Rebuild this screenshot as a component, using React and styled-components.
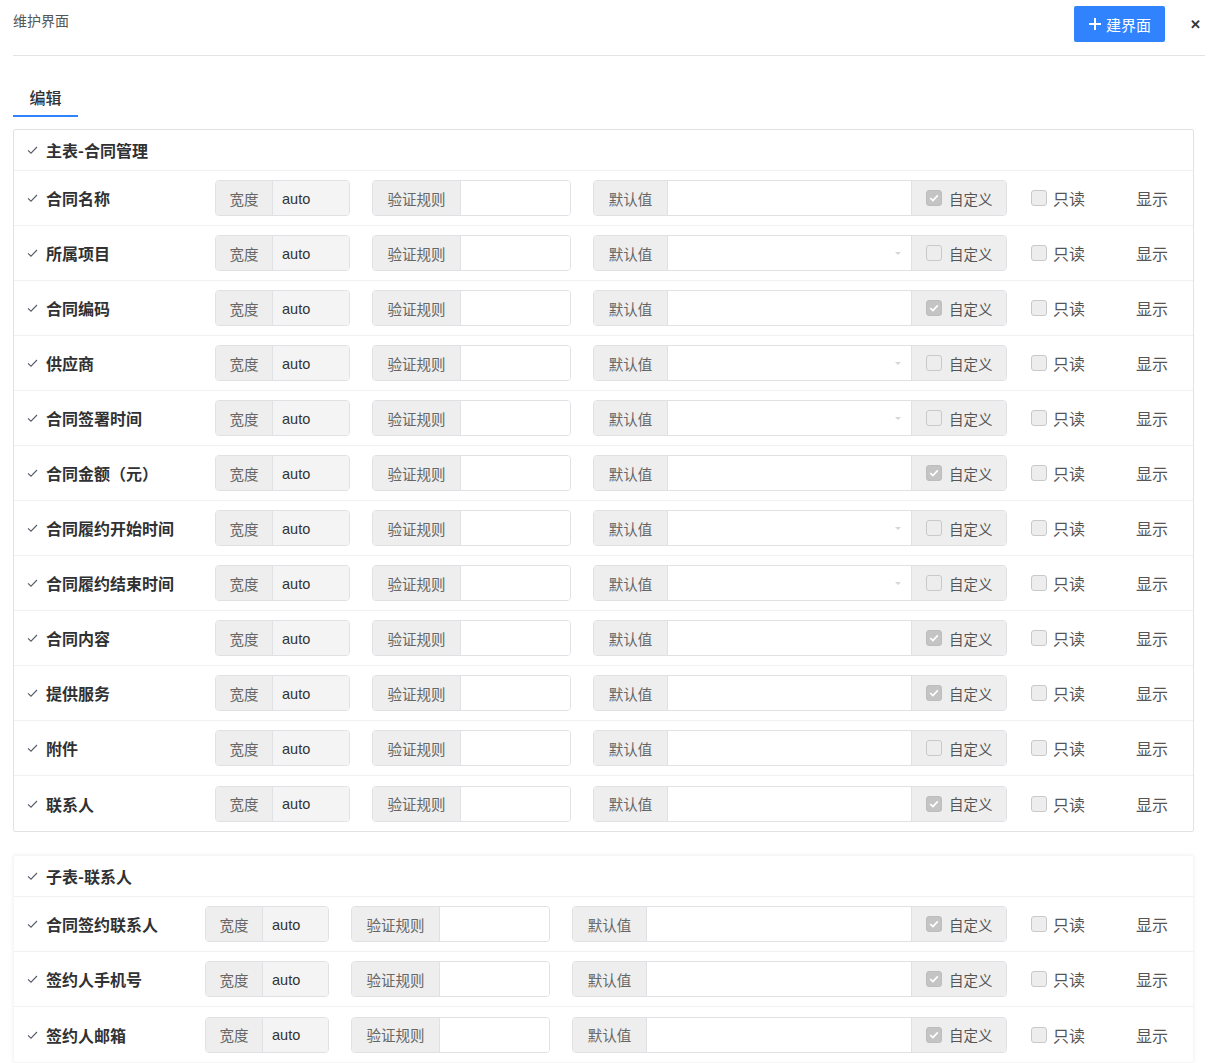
import styled, { createGlobalStyle } from "styled-components";

const GlobalStyle = createGlobalStyle`
  body {
    margin: 0;
    background: #fff;
    font-family: "Noto Sans CJK SC", "Noto Sans", "Liberation Sans", sans-serif;
    color: #333;
  }
  * { box-sizing: border-box; }
`;

const mainFields = [
  { name: "合同名称", custom: true },
  { name: "所属项目", custom: false, select: true },
  { name: "合同编码", custom: true },
  { name: "供应商", custom: false, select: true },
  { name: "合同签署时间", custom: false, select: true },
  { name: "合同金额（元）", custom: true },
  { name: "合同履约开始时间", custom: false, select: true },
  { name: "合同履约结束时间", custom: false, select: true },
  { name: "合同内容", custom: true },
  { name: "提供服务", custom: true },
  { name: "附件", custom: false },
  { name: "联系人", custom: true },
];

const subFields = [
  { name: "合同签约联系人", custom: true },
  { name: "签约人手机号", custom: true },
  { name: "签约人邮箱", custom: true },
];

// column widths: label, 宽度, 验证规则, 默认值
const sections = [
  { title: "主表-合同管理", fields: mainFields, cols: [166, 135, 199, 414], bordered: true },
  { title: "子表-联系人", fields: subFields, cols: [156, 124, 199, 435], bordered: false },
];

const Check = () => (
  <svg width="11" height="8" viewBox="0 0 11 8" fill="none">
    <path d="M1 4.3L4 7.2L10 1" stroke="#555b66" strokeWidth="1.1" />
  </svg>
);

const Box = ({ checked }) => (
  <BoxMark $checked={checked}>
    {checked && (
      <svg width="10" height="8" viewBox="0 0 10 8" fill="none">
        <path d="M1.2 4L3.9 6.6L8.8 1.4" stroke="#fff" strokeWidth="1.7" />
      </svg>
    )}
  </BoxMark>
);

const FieldRow = ({ field, cols }) => (
  <Row $cols={cols}>
    <Label>
      <Check />
      <span>{field.name}</span>
    </Label>
    <Group>
      <Prefix $w={57}>宽度</Prefix>
      <Input $disabled>auto</Input>
    </Group>
    <Group>
      <Prefix $w={88}>验证规则</Prefix>
      <Input />
    </Group>
    <Group>
      <Prefix $w={74}>默认值</Prefix>
      <Input>{field.select && <Caret />}</Input>
      <Suffix>
        <Box checked={field.custom} />
        <span>自定义</span>
      </Suffix>
    </Group>
    <ReadOnly>
      <Box checked={false} />
      <span>只读</span>
    </ReadOnly>
    <Show>显示</Show>
  </Row>
);

export default function App() {
  return (
    <>
      <GlobalStyle />
      <Page>
        <Header>
          <Title>维护界面</Title>
          <AddButton>
            <svg width="14" height="14" viewBox="0 0 14 14">
              <path d="M7 1v12M1 7h12" stroke="#fff" strokeWidth="2" />
            </svg>
            建界面
          </AddButton>
          <Close>✕</Close>
        </Header>
        <Tabs>
          <Tab>编辑</Tab>
        </Tabs>
        {sections.map((s) => (
          <Card key={s.title} $bordered={s.bordered}>
            <SectionHead>
              <Check />
              <span>{s.title}</span>
            </SectionHead>
            {s.fields.map((f) => (
              <FieldRow key={f.name} field={f} cols={s.cols} />
            ))}
          </Card>
        ))}
      </Page>
    </>
  );
}

const Page = styled.div`
  padding: 0 5px 0 13px;
`;

const Header = styled.div`
  height: 56px;
  display: flex;
  align-items: flex-start;
  padding-top: 6px;
  border-bottom: 1px solid #e4e4e4;
`;

const Title = styled.div`
  flex: 1;
  margin-top: 4px;
  font-size: 14px;
  line-height: 20px;
  color: #555;
`;

const AddButton = styled.button`
  display: flex;
  align-items: center;
  justify-content: center;
  gap: 4px;
  width: 91px;
  height: 36px;
  border: none;
  border-radius: 2px;
  background: #3083fc;
  color: #fff;
  font-family: inherit;
  font-size: 15px;
`;

const Close = styled.div`
  width: 40px;
  text-align: right;
  padding-right: 4px;
  margin-top: 8px;
  font-size: 13px;
  font-weight: 700;
  color: #333;
`;

const Tabs = styled.div`
  display: flex;
  margin-top: 23px;
`;

const Tab = styled.div`
  width: 65px;
  height: 38px;
  line-height: 36px;
  text-align: center;
  font-size: 16px;
  font-weight: 500;
  color: #303133;
  border-bottom: 2px solid #3083fc;
`;

const Card = styled.div`
  margin: 12px 11px 23px 0;
  border: 1px solid ${(p) => (p.$bordered ? "#e2e2e2" : "#f6f6f6")};
  border-radius: 2px;
  box-shadow: ${(p) => (p.$bordered ? "none" : "0 0 4px rgba(0, 0, 0, 0.06)")};
`;

const SectionHead = styled.div`
  height: 41px;
  display: flex;
  align-items: center;
  gap: 8px;
  padding-left: 13px;
  border-bottom: 1px solid #f1f1f1;
  font-size: 16px;
  font-weight: 600;
  color: #303133;
`;

const Row = styled.div`
  height: 55px;
  display: grid;
  grid-template-columns: ${(p) => p.$cols.map((c) => `${c}px`).join(" ")} 85px auto;
  column-gap: 22px;
  align-items: center;
  padding-left: 13px;
  border-bottom: 1px solid #f1f1f1;
  &:last-child { border-bottom: none; }
`;

const Label = styled.div`
  display: flex;
  align-items: center;
  gap: 8px;
  font-size: 16px;
  font-weight: 600;
  color: #303133;
  white-space: nowrap;
`;

const Group = styled.div`
  display: flex;
  height: 36px;
  border: 1px solid #dfe1e5;
  border-radius: 4px;
  overflow: hidden;
`;

const Prefix = styled.div`
  width: ${(p) => p.$w}px;
  flex-shrink: 0;
  display: flex;
  align-items: center;
  justify-content: center;
  background: #eeeeee;
  border-right: 1px solid #dfe1e5;
  font-size: 14.5px;
  color: #666;
`;

const Input = styled.div`
  flex: 1;
  position: relative;
  display: flex;
  align-items: center;
  padding: 1px 0 0 9px;
  background: ${(p) => (p.$disabled ? "#f4f4f4" : "#fff")};
  font-size: 14.5px;
  font-family: "Liberation Sans", "Noto Sans CJK SC", sans-serif;
  color: #333;
`;

const Caret = styled.span`
  position: absolute;
  right: 10px;
  top: 16px;
  border-left: 3px solid transparent;
  border-right: 3px solid transparent;
  border-top: 3px solid #d4d6da;
`;

const Suffix = styled.div`
  width: 95px;
  flex-shrink: 0;
  display: flex;
  align-items: center;
  gap: 7px;
  padding-left: 14px;
  background: #eeeeee;
  border-left: 1px solid #dfe1e5;
  font-size: 14.5px;
  color: #555;
`;

const BoxMark = styled.span`
  width: 16px;
  height: 16px;
  flex-shrink: 0;
  display: flex;
  align-items: center;
  justify-content: center;
  border-radius: 3px;
  border: 1px solid ${(p) => (p.$checked ? "#bdbdbd" : "#c9c9c9")};
  background: ${(p) => (p.$checked ? "#c4c4c4" : "#ededed")};
`;

const ReadOnly = styled.div`
  display: flex;
  align-items: center;
  gap: 6px;
  padding-left: 2px;
  font-size: 16px;
  color: #555;
`;

const Show = styled.div`
  font-size: 16px;
  color: #555;
`;
